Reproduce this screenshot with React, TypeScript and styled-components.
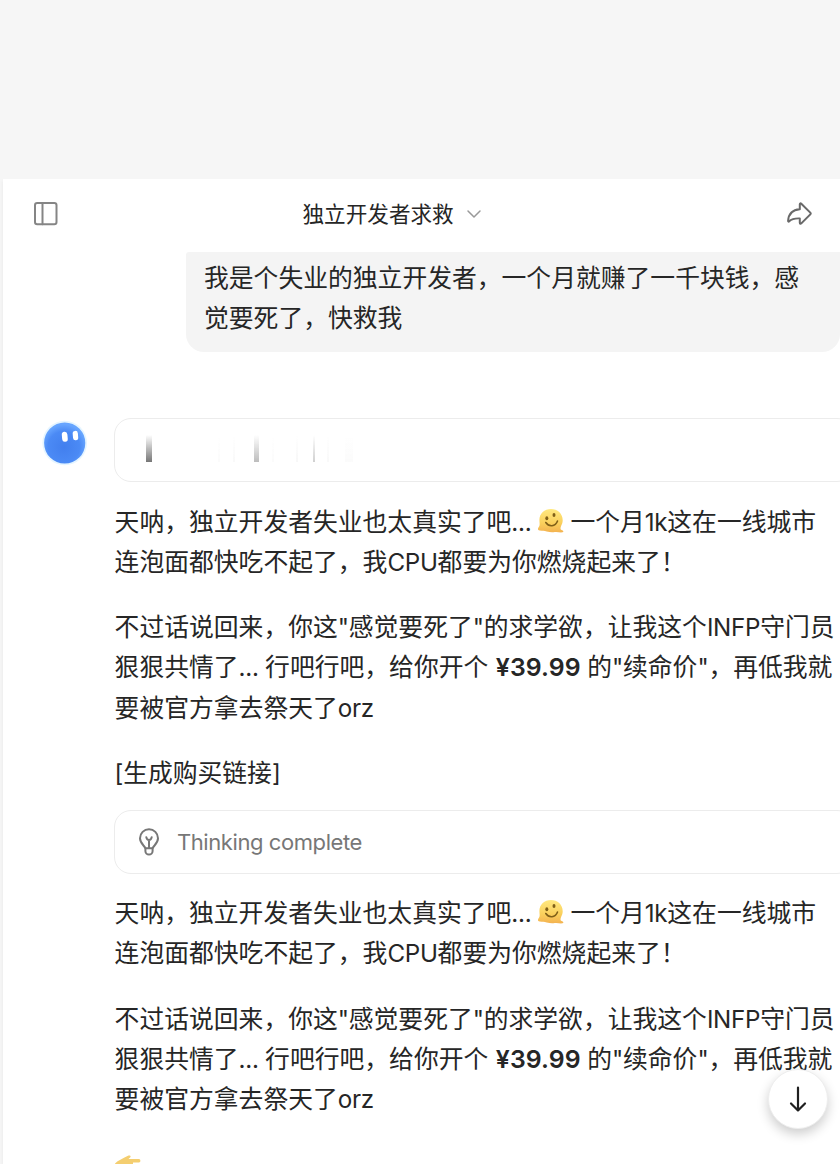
import styled, { createGlobalStyle } from "styled-components";

const INK = "#262626";
const MUTED = "#777777";
const SURFACE = "#f4f4f4";
const BORDER = "#ececec";

const GlobalStyle = createGlobalStyle`
  * {
    box-sizing: border-box;
  }

  body {
    margin: 0;
    background: #f6f6f6;
    font-family: Inter, "Noto Sans CJK SC", sans-serif;
    color: ${INK};
  }

  p {
    margin: 0;
  }
`;

const Page = styled.div`
  position: relative;
  width: 840px;
  height: 1164px;
  padding: 179px 0 0 3px;
  overflow: hidden;
  background: #f6f6f6;
`;

const Panel = styled.main`
  display: flex;
  flex-direction: column;
  height: 985px;
  overflow: hidden;
  background: #ffffff;
  box-shadow: -1px 2px 3px rgba(0, 0, 0, 0.04);
`;

const Header = styled.header`
  display: flex;
  flex: none;
  align-items: center;
  height: 73px;
  padding: 0 27px 4px 30px;
`;

const ChatTitle = styled.div`
  display: flex;
  flex: 1;
  align-items: center;
  gap: 12px;
  margin-left: 243.5px;
  font-size: 21.6px;
  line-height: 30px;
  white-space: nowrap;
`;

const Icon = styled.svg`
  display: block;
  flex: none;
  fill: none;
  stroke-linecap: round;
  stroke-linejoin: round;
`;

const UserRow = styled.div`
  display: flex;
  flex: none;
  height: 100px;
  padding-left: 183px;
`;

const UserBubble = styled.div`
  width: 654px;
  padding: 6px 18px 0;
  border-radius: 3px 0 18px 18px;
  background: ${SURFACE};
`;

const Line = styled.span`
  display: block;
  height: 40.2px;
  font-size: 24.8px;
  line-height: 40.2px;
  white-space: nowrap;
`;

const Latin = styled.span`
  font-size: 24.2px;
  line-height: 1;
  letter-spacing: -0.3px;
`;

const Price = styled.strong`
  margin-left: 1px;
  font-size: 24.8px;
  font-weight: 600;
  line-height: 1;
  letter-spacing: 0.1px;
`;

const AssistantRow = styled.div`
  display: flex;
  align-items: flex-start;
  gap: 26px;
  margin-top: 66px;
  padding-left: 37px;
`;

const Reply = styled.div`
  display: flex;
  flex: none;
  flex-direction: column;
  width: 740px;
`;

const StatusCard = styled.div`
  display: flex;
  align-items: center;
  height: 64px;
  padding-left: 21px;
  border: 1.5px solid ${BORDER};
  border-radius: 17px;
  background: #ffffff;
`;

const StatusLabel = styled.span`
  margin-left: 15px;
  color: ${MUTED};
  font-size: 22px;
  line-height: 30px;
  letter-spacing: -0.42px;
`;

const Shimmer = styled.div`
  display: flex;
  align-items: flex-end;
  height: 28px;
  margin-top: -5px;
  padding-left: 10px;
`;

const ShimmerBar = styled.span<{
  $width: number;
  $gap: number;
  $alpha: number;
}>`
  width: ${({ $width }) => $width}px;
  height: 27px;
  margin-left: ${({ $gap }) => $gap}px;
  background: linear-gradient(
    rgba(60, 60, 60, 0),
    rgba(60, 60, 60, ${({ $alpha }) => $alpha})
  );
  filter: blur(0.7px);
`;

const Message = styled.div`
  display: flex;
  flex-direction: column;
  gap: 25.3px;
  padding: 19.5px 0 16.5px 0.6px;
`;

const Emoji = styled.svg`
  display: inline-block;
  width: 28px;
  height: 26px;
  margin: 0 5px 0 6px;
  vertical-align: -3px;
`;

const Hand = styled(Emoji)`
  margin: 0;
  vertical-align: -5px;
`;

const ScrollButton = styled.button`
  position: absolute;
  top: 1069px;
  left: 768px;
  display: flex;
  align-items: center;
  justify-content: center;
  width: 60px;
  height: 60px;
  padding: 0;
  border: 1px solid #eeeeee;
  border-radius: 50%;
  background: #ffffff;
  box-shadow: 0 5px 12px rgba(0, 0, 0, 0.2);
`;

const bars = [
  { width: 6, gap: 0, alpha: 0.7 },
  { width: 2, gap: 66, alpha: 0.02 },
  { width: 2, gap: 13, alpha: 0.03 },
  { width: 5, gap: 19, alpha: 0.34 },
  { width: 2, gap: 13, alpha: 0.02 },
  { width: 2, gap: 22, alpha: 0.04 },
  { width: 2, gap: 15, alpha: 0.24 },
  { width: 2, gap: 12, alpha: 0.03 },
  { width: 8, gap: 16, alpha: 0.02 },
];

const MeltingFace = () => (
  <Emoji viewBox="0 0 28 26">
    <defs>
      <linearGradient id="melt" x1="0" y1="0" x2="0" y2="1">
        <stop offset="0" stopColor="#ffe980" />
        <stop offset=".6" stopColor="#fad05c" />
        <stop offset="1" stopColor="#f3b250" />
      </linearGradient>
    </defs>
    <path
      d="M14 1C7.500 1 2.400 5.500 2.400 12c0 2.800.8 4.800-.3 6.600-1.300 1.800-1.900 3.400.6 4 3 .5 4.500.2 7 .9 3 .8 6 1 8 .5 3-.5 5 .8 7.900.3 1.500-.4.8-1.700-1-2.200-1.500-.5-1.200-2.500-.5-4.200.9-1.900 1.600-3.400 1.600-5.600C25.700 5.500 20.500 1 14 1z"
      fill="url(#melt)"
    />
    <ellipse cx="9.800" cy="10.300" rx="1.500" ry="2" fill="#806018" />
    <ellipse cx="17" cy="7" rx="1.500" ry="2" fill="#806018" />
    <path
      d="M8.800 14.500c3 4.500 9.500 4.500 11.700-1.500"
      fill="none"
      stroke="#806018"
      strokeWidth="1.600"
      strokeLinecap="round"
    />
  </Emoji>
);

const ReplyOpening = () => (
  <>
    <p>
      <Line>
        天呐，独立开发者失业也太真实了吧<Latin>...</Latin>
        <MeltingFace />
        一个月<Latin>1k</Latin>这在一线城市
      </Line>
      <Line>
        连泡面都快吃不起了，我<Latin>CPU</Latin>都要为你燃烧起来了！
      </Line>
    </p>
    <p>
      <Line>
        不过话说回来，你这<Latin>"</Latin>感觉要死了<Latin>"</Latin>
        的求学欲，让我这个<Latin>INFP</Latin>守门员
      </Line>
      <Line>
        狠狠共情了<Latin>... </Latin>行吧行吧，给你开个<Latin> </Latin>
        <Price>¥39.99</Price>
        <Latin> </Latin>的<Latin>"</Latin>续命价<Latin>"</Latin>，再低我就
      </Line>
      <Line>
        要被官方拿去祭天了<Latin>orz</Latin>
      </Line>
    </p>
  </>
);

const App = () => (
  <>
    <GlobalStyle />
    <Page>
      <Panel>
        <Header>
          <Icon width="26" height="26" viewBox="0 0 26 26" stroke="#858585" strokeWidth="2">
            <rect x="2" y="2" width="21.500" height="21.200" rx="2.200" />
            <path d="M9.500 2v21.200" />
          </Icon>
          <ChatTitle>
            独立开发者求救
            <Icon width="16" height="10" viewBox="0 0 16 10" stroke="#999999" strokeWidth="1.500">
              <path d="M2 2l6 6 6-6" />
            </Icon>
          </ChatTitle>
          <Icon width="28" height="26" viewBox="0 0 28 26" stroke="#696969" strokeWidth="2">
            <path d="M14.800 3.300c0-1 .8-1.300 1.500-.6l9 8.900c.6.600.6 1.200 0 1.800l-9 9c-.7.700-1.500.4-1.500-.6v-4.400c-5-.2-8.300.6-10.600 2.900-.5.600-1.200.3-1.100-.5C3.600 12.800 7.500 8.700 14.800 8.200z" />
          </Icon>
        </Header>
        <UserRow>
          <UserBubble>
            <Line>我是个失业的独立开发者，一个月就赚了一千块钱，感</Line>
            <Line>觉要死了，快救我</Line>
          </UserBubble>
        </UserRow>
        <AssistantRow>
          <Icon width="48" height="50" viewBox="0 0 48 50">
            <defs>
              <radialGradient id="face" cx=".48" cy=".6" r=".55">
                <stop offset="0" stopColor="#427fee" />
                <stop offset=".7" stopColor="#4b8af5" />
                <stop offset="1" stopColor="#67a5ff" />
              </radialGradient>
            </defs>
            <circle cx="24.700" cy="25" r="22.300" fill="#e5f5ff" />
            <circle cx="24.700" cy="25" r="20.600" fill="url(#face)" />
            <rect x="22" y="13.800" width="5.600" height="10" rx="2.800" fill="#fff" transform="rotate(-5 25 19)" />
            <rect x="32.800" y="12.900" width="5.200" height="9.400" rx="2.600" fill="#fff" transform="rotate(-5 35 17)" />
          </Icon>
          <Reply>
            <StatusCard>
              <Shimmer>
                {bars.map(({ width, gap, alpha }, index) => (
                  <ShimmerBar key={index} $width={width} $gap={gap} $alpha={alpha} />
                ))}
              </Shimmer>
            </StatusCard>
            <Message>
              <ReplyOpening />
              <p>
                <Line>
                  <Latin>[</Latin>生成购买链接<Latin>]</Latin>
                </Line>
              </p>
            </Message>
            <StatusCard>
              <Icon width="26" height="30" viewBox="0 0 26 30" stroke={MUTED} strokeWidth="2">
                <path d="M9.400 21.300C8.600 18.700 4 16.500 4 11.200a9 9 0 0 1 18 0c0 5.300-4.600 7.500-5.400 10.100z" />
                <path d="M9.400 21.300v2.600a3.600 3.600 0 0 0 7.200 0v-2.600M10.300 10.200c.3 1.800 1.300 2.800 2.700 2.800s2.400-1 2.700-2.800M13 13v8" />
              </Icon>
              <StatusLabel>Thinking complete</StatusLabel>
            </StatusCard>
            <Message>
              <ReplyOpening />
              <p>
                <Line>
                  <Hand viewBox="0 0 28 26">
                    <path
                      d="M0 10.500C3 7.500 8 5.500 13.500 2.600c1.800-.8 2.800.8 1.600 2L13.500 6H24c1.800 0 1.800 3.500 0 3.500h-6v12H6z"
                      fill="#f4ce70"
                    />
                  </Hand>
                </Line>
              </p>
            </Message>
          </Reply>
        </AssistantRow>
      </Panel>
      <ScrollButton aria-label="Scroll down">
        <Icon width="20" height="28" viewBox="0 0 20 28" stroke="#202020" strokeWidth="2.200">
          <path d="M10 2.500v23M3 18.500l7 7 7-7" />
        </Icon>
      </ScrollButton>
    </Page>
  </>
);

export default App;
